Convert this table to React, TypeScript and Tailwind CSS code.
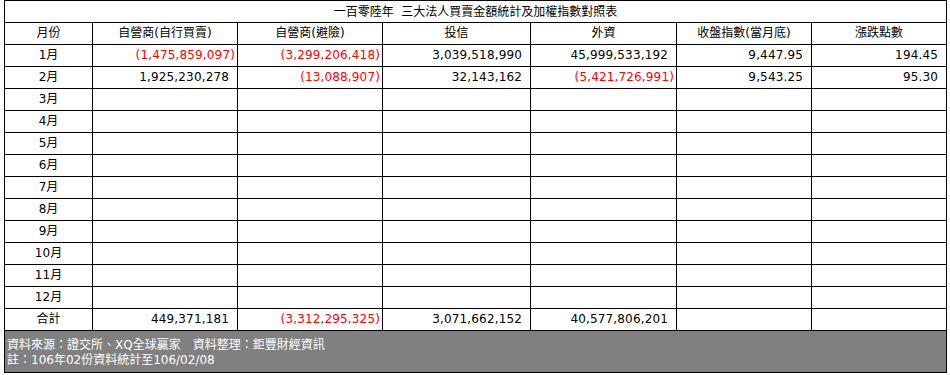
import React from 'react';

const rows: string[][] = [
  ['1月', '(1,475,859,097)', '(3,299,206,418)', '3,039,518,990', '45,999,533,192', '9,447.95', '194.45'],
  ['2月', '1,925,230,278', '(13,088,907)', '32,143,162', '(5,421,726,991)', '9,543.25', '95.30'],
  ['3月', '', '', '', '', '', ''],
  ['4月', '', '', '', '', '', ''],
  ['5月', '', '', '', '', '', ''],
  ['6月', '', '', '', '', '', ''],
  ['7月', '', '', '', '', '', ''],
  ['8月', '', '', '', '', '', ''],
  ['9月', '', '', '', '', '', ''],
  ['10月', '', '', '', '', '', ''],
  ['11月', '', '', '', '', '', ''],
  ['12月', '', '', '', '', '', ''],
  ['合計', '449,371,181', '(3,312,295,325)', '3,071,662,152', '40,577,806,201', '', ''],
];

const headers = ['月份', '自營商(自行買賣)', '自營商(避險)', '投信', '外資', '收盤指數(當月底)', '漲跌點數'];

const NumCell = ({ value }: { value: string }) => {
  const negative = value.startsWith('(');
  return (
    <div
      className={
        negative
          ? 'bg-white h-[21px] flex items-center justify-end pr-[2px] text-[#ff0000] tracking-[0.15px]'
          : 'bg-white h-[21px] flex items-center justify-end pr-[8px] text-black tracking-[0.15px]'
      }
    >
      {value}
    </div>
  );
};

export default function App() {
  return (
    <div
      className="bg-white w-[950px] h-[375px] text-[12px] leading-[15px] text-black"
      style={{ fontFamily: '"DejaVu Sans", "Noto Sans CJK TC", sans-serif' }}
    >
      <div className="ml-[4px] w-[943px] bg-black p-px grid grid-cols-[87px_144px_144px_147px_145px_134px_134px] gap-px">
        {/* title */}
        <div className="col-span-7 bg-white h-[21px] flex items-center justify-center pt-px">
          一百零陸年&nbsp;&nbsp;三大法人買賣金額統計及加權指數對照表
        </div>

        {/* header */}
        {headers.map((h) => (
          <div key={h} className="bg-white h-[21px] flex items-center justify-center">
            {h}
          </div>
        ))}

        {/* body */}
        {rows.map((r) => (
          <React.Fragment key={r[0]}>
            <div className="bg-white h-[21px] flex items-center justify-center">{r[0]}</div>
            {r.slice(1).map((v, i) => (
              <NumCell key={i} value={v} />
            ))}
          </React.Fragment>
        ))}

        {/* footer */}
        <div className="col-span-7 bg-[#808080] h-[41px] pl-[2px] pt-[7px] text-white">
          <div>資料來源：證交所、XQ全球贏家　資料整理：鉅豐財經資訊</div>
          <div>註：106年02份資料統計至106/02/08</div>
        </div>
      </div>
    </div>
  );
}
